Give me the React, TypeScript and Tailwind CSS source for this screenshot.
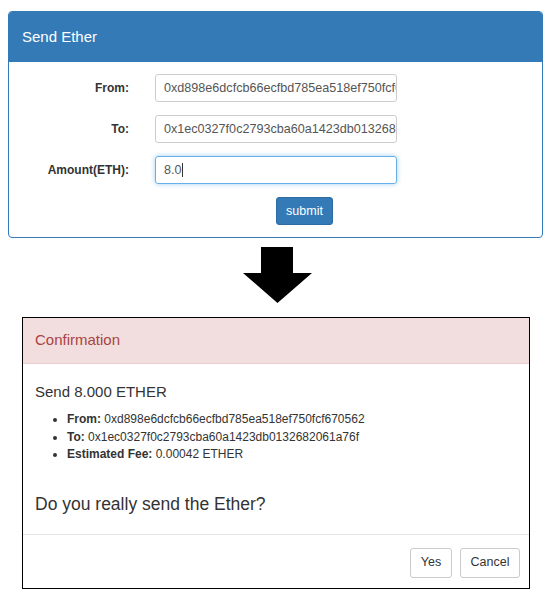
import React from "react";

export default function App() {
  return (
    <div className="w-[551px] h-[603px] bg-white text-[#333] font-['Liberation_Sans',Arial,sans-serif] pt-[11px] overflow-hidden">
      <div className="mx-[8px] border border-[#337ab7] rounded-[4px] overflow-hidden">
        <div className="h-[50px] bg-[#337ab7] text-white text-[15px] flex items-center px-[13px]">
          Send Ether
        </div>
        <div className="pt-[12px] pb-[12px] flex flex-col gap-[13px]">
          {[
            { label: "From:", value: "0xd898e6dcfcb66ecfbd785ea518ef750fcf670562", focus: false },
            { label: "To:", value: "0x1ec0327f0c2793cba60a1423db0132682061a76f", focus: false },
            { label: "Amount(ETH):", value: "8.0", focus: true },
          ].map((r) => (
            <div key={r.label} className="flex items-center">
              <div className="w-[120px] text-right font-bold text-[12px]">{r.label}</div>
              <div
                className={
                  r.focus
                    ? "ml-[26px] w-[242px] h-[28px] rounded-[3px] border border-[#66afe9] shadow-[0_0_5px_rgba(102,175,233,0.6)] flex items-center px-[8px] text-[12.6px] text-[#555] overflow-hidden whitespace-nowrap"
                    : "ml-[26px] w-[242px] h-[28px] rounded-[3px] border border-[#ccc] flex items-center px-[8px] text-[12.6px] text-[#555] overflow-hidden whitespace-nowrap"
                }
              >
                {r.value}
                {r.focus && <span className="inline-block w-px h-[14px] bg-[#333]" />}
              </div>
            </div>
          ))}
          <div className="flex">
            <div className="ml-[267px] w-[57px] h-[28px] rounded-[3px] bg-[#337ab7] border border-[#2e6da4] text-white text-[12.5px] flex items-center justify-center">
              submit
            </div>
          </div>
        </div>
      </div>

      <div className="flex mt-[9px] ml-[243px]">
        <svg width="69" height="56" viewBox="0 0 69 56">
          <polygon points="18,0 50,0 50,26 69,26 34.5,56 0,26 18,26" fill="#000" />
        </svg>
      </div>

      <div className="mt-[14px] ml-[22px] w-[508px] border border-black bg-white">
        <div className="h-[46px] bg-[#f2dede] text-[#a94442] text-[15px] flex items-center px-[12px] border-b border-[#ebccd1]">
          Confirmation
        </div>
        <div className="px-[12px] pt-[19px] pb-[20px]">
          <div className="text-[15px] leading-[18px]">Send 8.000 ETHER</div>
          <ul className="list-disc pl-[32px] mt-[10px] text-[12px] leading-[17.5px]">
            <li><b>From:</b> 0xd898e6dcfcb66ecfbd785ea518ef750fcf670562</li>
            <li><b>To:</b> 0x1ec0327f0c2793cba60a1423db0132682061a76f</li>
            <li><b>Estimated Fee:</b> 0.00042 ETHER</li>
          </ul>
          <div className="text-[17.5px] leading-[20px] mt-[30px]">Do you really send the Ether?</div>
        </div>
        <div className="border-t border-[#e5e5e5] flex justify-end gap-[8px] px-[9px] pt-[13px] pb-[10px]">
          <div className="w-[42px] h-[30px] rounded-[3px] border border-[#ccc] text-[12.5px] flex items-center justify-center">Yes</div>
          <div className="w-[60px] h-[30px] rounded-[3px] border border-[#ccc] text-[12.5px] flex items-center justify-center">Cancel</div>
        </div>
      </div>
    </div>
  );
}
